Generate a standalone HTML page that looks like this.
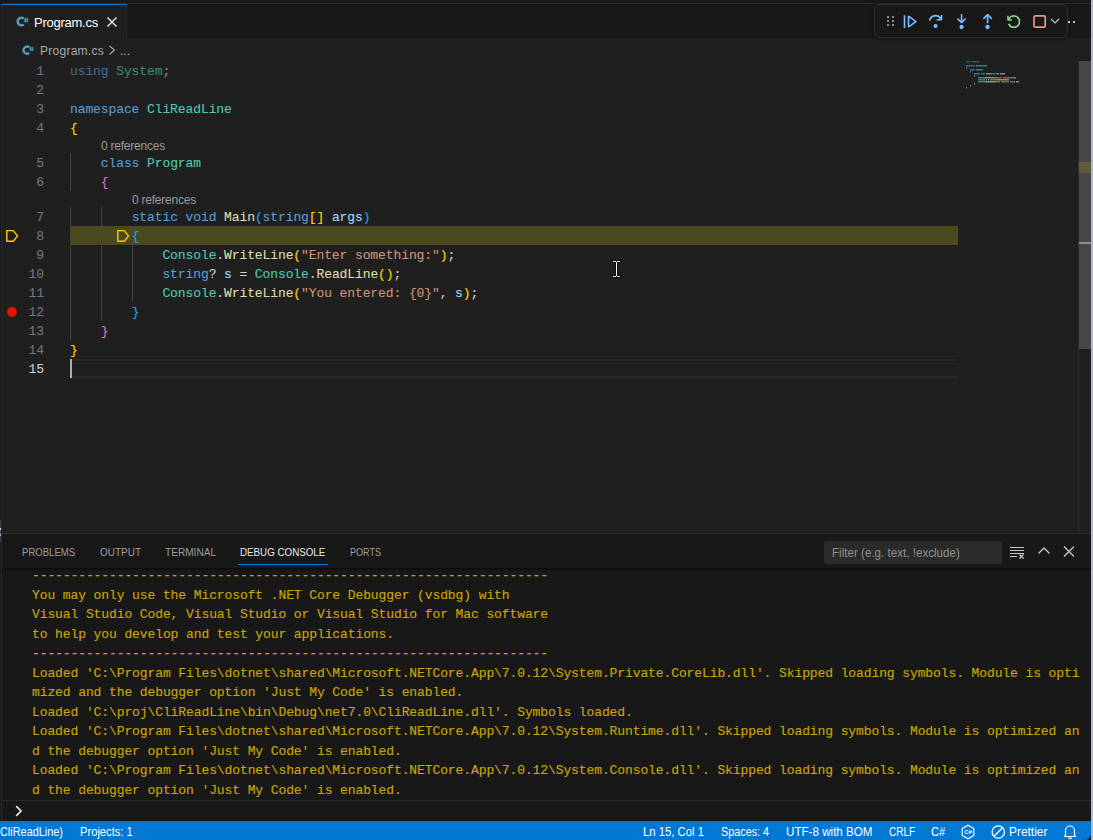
<!DOCTYPE html>
<html><head><meta charset="utf-8">
<style>
*{margin:0;padding:0;box-sizing:border-box}
html,body{width:1093px;height:840px;overflow:hidden;background:#181818}
body{position:relative;font-family:"Liberation Sans",sans-serif;color:#cccccc}
.a{position:absolute}
.mono{font-family:"Liberation Mono",monospace;font-size:13px;letter-spacing:-0.1px;white-space:pre;-webkit-text-stroke:0.12px currentColor}
.ln{position:absolute;left:0;margin-top:1px;width:44px;text-align:right;color:#6e7681}
.code{position:absolute;left:70px;margin-top:1px}
.k{color:#569cd6}.t{color:#4ec9b0}.f{color:#dcdcaa}.s{color:#ce9178}.v{color:#9cdcfe}.p{color:#cccccc}
.b1{color:#ffd700}.b2{color:#da70d6}.b3{color:#179fff}
.guide{position:absolute;width:1px;background:#404040}
.con{position:absolute;left:32px;color:#cca700}
</style></head><body>
<!-- left border -->
<div class="a" style="left:1px;top:4px;width:1px;height:817px;background:#2b2b2b"></div>
<div class="a" style="left:0;top:520px;width:1px;height:22px;background:#3b3e44"></div><div class="a" style="left:0;top:528px;width:1px;height:2px;background:#e0e0e0"></div><div class="a" style="left:0;top:533px;width:1px;height:2px;background:#4a9ad8"></div><div class="a" style="left:0;top:535px;width:1px;height:1px;background:#d8c060"></div>
<!-- right window edge -->
<div class="a" style="left:1091px;top:0;width:2px;height:840px;background:#b4b8d0"></div>

<!-- tab bar -->
<div class="a" style="left:2px;top:3px;width:1089px;height:35px;background:#181818;border-top:1px solid #2b2b2b"></div>
<div class="a" style="left:2px;top:4px;width:125px;height:34px;background:#1f1f1f;border-top:1px solid #0078d4;border-right:1px solid #2b2b2b"></div>

<!-- editor -->
<div class="a" style="left:2px;top:38px;width:1089px;height:495px;background:#1f1f1f"></div>

<!-- TABS -->
<svg class="a" style="left:15.7px;top:15.7px;transform:scale(1.0);transform-origin:0 0" width="14" height="12" viewBox="0 0 14 12"><path d="M7.85 2.6A3.75 3.75 0 1 0 7.85 8.4" stroke="#519aba" stroke-width="2.6" fill="none"/><path d="M9.3 1.8V6.6M11.1 1.8V6.6M7.9 3.3H12.4M7.9 5.1H12.4" stroke="#519aba" stroke-width="1.0" fill="none"/></svg>
<svg class="a" style="left:21.9px;top:45.2px;transform:scale(0.93);transform-origin:0 0" width="14" height="12" viewBox="0 0 14 12"><path d="M7.85 2.6A3.75 3.75 0 1 0 7.85 8.4" stroke="#519aba" stroke-width="2.6" fill="none"/><path d="M9.3 1.8V6.6M11.1 1.8V6.6M7.9 3.3H12.4M7.9 5.1H12.4" stroke="#519aba" stroke-width="1.0" fill="none"/></svg>
<div class="a" style="left:34px;top:6px;height:34px;line-height:34px;font-size:13px;color:#ffffff;letter-spacing:-0.25px;white-space:pre">Program.cs</div>
<svg class="a" style="left:106px;top:16px" width="12" height="12" viewBox="0 0 12 12"><path d="M1.5 1.5L10.5 10.5M10.5 1.5L1.5 10.5" stroke="#e0e0e0" stroke-width="1.5" fill="none"/></svg>
<!-- BREADCRUMBS -->
<div class="a" style="left:40px;top:41px;height:20px;line-height:20px;font-size:12px;color:#a9a9a9;letter-spacing:0.26px;white-space:pre">Program.cs</div>
<svg class="a" style="left:108px;top:45px" width="8" height="10" viewBox="0 0 8 10"><path d="M1.5 1L6.5 5L1.5 9.5" stroke="#a9a9a9" stroke-width="1.1" fill="none"/></svg>
<div class="a" style="left:120px;top:41px;height:20px;line-height:20px;font-size:12px;color:#a9a9a9;white-space:pre">...</div>
<!-- EDITOR -->
<div class="a" style="left:70px;top:359px;width:888px;height:19px;border-top:2px solid #282828;border-bottom:2px solid #282828"></div>
<div class="a" style="left:70px;top:226px;width:888px;height:19px;background:#4b4a1e"></div>
<div class="guide" style="left:70px;top:153px;height:38px"></div>
<div class="guide" style="left:70px;top:207px;height:133px"></div>
<div class="guide" style="left:101px;top:207px;height:114px"></div>
<div class="guide" style="left:132px;top:245px;height:57px"></div>
<div class="a" style="left:70px;top:359px;width:2px;height:19px;background:#aeafad"></div>
<div class="mono ln" style="top:61px;height:19px;line-height:19px;color:#6e7681">1</div>
<div class="mono code" style="top:61px;height:19px;line-height:19px"><span class="k" style="opacity:.6">using</span> <span class="t" style="opacity:.6">System</span><span style="opacity:.6">;</span></div>
<div class="mono ln" style="top:80px;height:19px;line-height:19px;color:#6e7681">2</div>
<div class="mono code" style="top:80px;height:19px;line-height:19px"></div>
<div class="mono ln" style="top:99px;height:19px;line-height:19px;color:#6e7681">3</div>
<div class="mono code" style="top:99px;height:19px;line-height:19px"><span class="k">namespace</span> <span class="t">CliReadLine</span></div>
<div class="mono ln" style="top:118px;height:19px;line-height:19px;color:#6e7681">4</div>
<div class="mono code" style="top:118px;height:19px;line-height:19px"><span class="b1">{</span></div>
<div class="mono ln" style="top:153px;height:19px;line-height:19px;color:#6e7681">5</div>
<div class="mono code" style="top:153px;height:19px;line-height:19px">    <span class="k">class</span> <span class="t">Program</span></div>
<div class="mono ln" style="top:172px;height:19px;line-height:19px;color:#6e7681">6</div>
<div class="mono code" style="top:172px;height:19px;line-height:19px">    <span class="b2">{</span></div>
<div class="mono ln" style="top:207px;height:19px;line-height:19px;color:#6e7681">7</div>
<div class="mono code" style="top:207px;height:19px;line-height:19px">        <span class="k">static</span> <span class="k">void</span> <span class="f">Main</span><span class="b3">(</span><span class="k">string</span><span class="b1">[]</span> <span class="v">args</span><span class="b3">)</span></div>
<div class="mono ln" style="top:226px;height:19px;line-height:19px;color:#6e7681">8</div>
<div class="mono code" style="top:226px;height:19px;line-height:19px">        <span class="b3">{</span></div>
<div class="mono ln" style="top:245px;height:19px;line-height:19px;color:#6e7681">9</div>
<div class="mono code" style="top:245px;height:19px;line-height:19px">            <span class="t">Console</span>.<span class="f">WriteLine</span><span class="b1">(</span><span class="s">"Enter something:"</span><span class="b1">)</span>;</div>
<div class="mono ln" style="top:264px;height:19px;line-height:19px;color:#6e7681">10</div>
<div class="mono code" style="top:264px;height:19px;line-height:19px">            <span class="k">string</span>? <span class="v">s</span> = <span class="t">Console</span>.<span class="f">ReadLine</span><span class="b1">()</span>;</div>
<div class="mono ln" style="top:283px;height:19px;line-height:19px;color:#6e7681">11</div>
<div class="mono code" style="top:283px;height:19px;line-height:19px">            <span class="t">Console</span>.<span class="f">WriteLine</span><span class="b1">(</span><span class="s">"You entered: {0}"</span>, <span class="v">s</span><span class="b1">)</span>;</div>
<div class="mono ln" style="top:302px;height:19px;line-height:19px;color:#6e7681">12</div>
<div class="mono code" style="top:302px;height:19px;line-height:19px">        <span class="b3">}</span></div>
<div class="mono ln" style="top:321px;height:19px;line-height:19px;color:#6e7681">13</div>
<div class="mono code" style="top:321px;height:19px;line-height:19px">    <span class="b2">}</span></div>
<div class="mono ln" style="top:340px;height:19px;line-height:19px;color:#6e7681">14</div>
<div class="mono code" style="top:340px;height:19px;line-height:19px"><span class="b1">}</span></div>
<div class="mono ln" style="top:359px;height:19px;line-height:19px;color:#cccccc">15</div>
<div class="mono code" style="top:359px;height:19px;line-height:19px"></div>
<div class="a" style="left:101px;top:138px;height:16px;line-height:16px;font-size:12px;color:#999999;letter-spacing:-0.23px;white-space:pre">0 references</div>
<div class="a" style="left:132px;top:192px;height:16px;line-height:16px;font-size:12px;color:#999999;letter-spacing:-0.23px;white-space:pre">0 references</div>
<svg class="a" style="left:5px;top:229px" width="15" height="15" viewBox="0 0 15 15"><path d="M1.8 1.6H8.2L12.6 6.9L8.2 12.3H1.8Z" stroke="#ffcc00" stroke-width="1.45" fill="none" stroke-linejoin="round"/></svg>
<svg class="a" style="left:116px;top:229px" width="15" height="15" viewBox="0 0 15 15"><path d="M1.8 1.6H8.2L12.6 6.9L8.2 12.3H1.8Z" stroke="#ffcc00" stroke-width="1.45" fill="none" stroke-linejoin="round"/></svg>
<div class="a" style="left:7px;top:307px;width:10px;height:10px;border-radius:50%;background:#e51400"></div>
<div class="a" style="left:874px;top:4px;width:194px;height:34px;background:#181818;border:1px solid #303030;border-radius:5px;box-shadow:0 0 4px rgba(0,0,0,.5)"></div>
<svg class="a" style="left:0;top:0" width="1093" height="40"><rect x="887" y="16" width="2" height="2" fill="#8a8a8a"/><rect x="887" y="20" width="2" height="2" fill="#8a8a8a"/><rect x="887" y="24" width="2" height="2" fill="#8a8a8a"/><rect x="892" y="16" width="2" height="2" fill="#8a8a8a"/><rect x="892" y="20" width="2" height="2" fill="#8a8a8a"/><rect x="892" y="24" width="2" height="2" fill="#8a8a8a"/></svg>
<svg class="a" style="left:900.9px;top:13px" width="17.2" height="17.2" viewBox="0 0 16 16"><path d="M2.5 2H4v12H2.5V2zm4.936.39L6.25 3v10l1.186.61 7-5V7.39l-7-5zM7.75 11.543V4.457L12.71 8l-4.96 3.543z" fill="#75beff"/></svg>
<svg class="a" style="left:926.9px;top:13px" width="17.2" height="17.2" viewBox="0 0 16 16"><path d="M14.25 1.75v4.5l-.75.75H9V5.5h3.1A5 5 0 0 0 3.05 7.3l-1.45-.4A6.5 6.5 0 0 1 12.75 3.7V1.75h1.5zM8 14a1.9 1.9 0 1 0 0-3.8A1.9 1.9 0 0 0 8 14z" fill="#75beff"/></svg>
<svg class="a" style="left:952.9px;top:13px" width="17.2" height="17.2" viewBox="0 0 16 16"><path d="M8 9.532h.542l3.905-3.905-1.061-1.06-2.637 2.61V1H7.251v6.177l-2.637-2.61-1.061 1.06 3.905 3.905H8zm1.956 3.481a2 2 0 1 1-4 0 2 2 0 0 1 4 0z" fill="#75beff"/></svg>
<svg class="a" style="left:978.9px;top:13px" width="17.2" height="17.2" viewBox="0 0 16 16"><path d="M8 1h-.542L3.553 4.905l1.061 1.06 2.637-2.61v6.177h1.498V3.355l2.637 2.61 1.061-1.06L8.542 1H8zm1.956 12.013a2 2 0 1 1-4 0 2 2 0 0 1 4 0z" fill="#75beff"/></svg>
<svg class="a" style="left:1004.9px;top:13px" width="17.2" height="17.2" viewBox="0 0 16 16"><path d="M12.75 8a4.5 4.5 0 0 1-8.61 1.834l-1.391.565A6.001 6.001 0 0 0 14.25 8 6 6 0 0 0 3.5 4.334V2.5H2v4l.75.75h3.5v-1.5H4.352A4.5 4.5 0 0 1 12.75 8z" fill="#89d185"/></svg>
<svg class="a" style="left:1032px;top:14px" width="15" height="14" viewBox="0 0 15 14"><rect x="2" y="1.9" width="11.2" height="11.2" rx="1.2" stroke="#ec967a" stroke-width="1.7" fill="none"/></svg>
<svg class="a" style="left:1049px;top:16px" width="12" height="10" viewBox="0 0 12 10"><path d="M2 3L6 7L10 3" stroke="#c5c5c5" stroke-width="1.2" fill="none"/></svg>
<div class="a" style="left:1068px;top:21px;width:2px;height:2px;background:#c5c5c5"></div><div class="a" style="left:1073px;top:21px;width:2px;height:2px;background:#c5c5c5"></div>
<div class="a" style="left:1078px;top:61px;width:1px;height:472px;background:#2b2b2b"></div>
<div class="a" style="left:1079px;top:61px;width:12px;height:288px;background:#464646"></div>
<div class="a" style="left:1079px;top:162px;width:12px;height:11px;background:#5f5b3b"></div>
<div class="a" style="left:1079px;top:242px;width:12px;height:2px;background:#8c8c8c"></div>
<!-- MINIMAP -->
<svg class="a" style="left:0;top:0" width="1093" height="100"><rect x="966" y="61" width="5" height="1.5" fill="#569cd6" fill-opacity="0.35"/><rect x="972" y="61" width="6" height="1.5" fill="#4ec9b0" fill-opacity="0.35"/><rect x="978" y="61" width="1" height="1.5" fill="#cccccc" fill-opacity="0.35"/><rect x="966" y="65" width="9" height="1.5" fill="#569cd6" fill-opacity="0.6"/><rect x="976" y="65" width="11" height="1.5" fill="#4ec9b0" fill-opacity="0.6"/><rect x="966" y="67" width="1" height="1.5" fill="#cccccc" fill-opacity="0.6"/><rect x="970" y="69" width="5" height="1.5" fill="#569cd6" fill-opacity="0.6"/><rect x="976" y="69" width="7" height="1.5" fill="#4ec9b0" fill-opacity="0.6"/><rect x="970" y="71" width="1" height="1.5" fill="#cccccc" fill-opacity="0.6"/><rect x="974" y="73" width="6" height="1.5" fill="#569cd6" fill-opacity="0.6"/><rect x="981" y="73" width="4" height="1.5" fill="#569cd6" fill-opacity="0.6"/><rect x="986" y="73" width="4" height="1.5" fill="#dcdcaa" fill-opacity="0.6"/><rect x="990" y="73" width="1" height="1.5" fill="#cccccc" fill-opacity="0.6"/><rect x="991" y="73" width="6" height="1.5" fill="#569cd6" fill-opacity="0.6"/><rect x="997" y="73" width="2" height="1.5" fill="#cccccc" fill-opacity="0.6"/><rect x="1000" y="73" width="4" height="1.5" fill="#9cdcfe" fill-opacity="0.6"/><rect x="1004" y="73" width="1" height="1.5" fill="#cccccc" fill-opacity="0.6"/><rect x="974" y="75" width="1" height="1.5" fill="#cccccc" fill-opacity="0.6"/><rect x="978" y="77" width="7" height="1.5" fill="#4ec9b0" fill-opacity="0.6"/><rect x="985" y="77" width="1" height="1.5" fill="#cccccc" fill-opacity="0.6"/><rect x="986" y="77" width="9" height="1.5" fill="#dcdcaa" fill-opacity="0.6"/><rect x="995" y="77" width="1" height="1.5" fill="#cccccc" fill-opacity="0.6"/><rect x="996" y="77" width="6" height="1.5" fill="#ce9178" fill-opacity="0.6"/><rect x="1003" y="77" width="11" height="1.5" fill="#ce9178" fill-opacity="0.6"/><rect x="1014" y="77" width="1" height="1.5" fill="#cccccc" fill-opacity="0.6"/><rect x="1015" y="77" width="1" height="1.5" fill="#cccccc" fill-opacity="0.6"/><rect x="978" y="79" width="6" height="1.5" fill="#569cd6" fill-opacity="0.6"/><rect x="984" y="79" width="1" height="1.5" fill="#cccccc" fill-opacity="0.6"/><rect x="986" y="79" width="1" height="1.5" fill="#9cdcfe" fill-opacity="0.6"/><rect x="988" y="79" width="1" height="1.5" fill="#cccccc" fill-opacity="0.6"/><rect x="990" y="79" width="7" height="1.5" fill="#4ec9b0" fill-opacity="0.6"/><rect x="997" y="79" width="1" height="1.5" fill="#cccccc" fill-opacity="0.6"/><rect x="998" y="79" width="8" height="1.5" fill="#dcdcaa" fill-opacity="0.6"/><rect x="1006" y="79" width="2" height="1.5" fill="#cccccc" fill-opacity="0.6"/><rect x="1008" y="79" width="1" height="1.5" fill="#cccccc" fill-opacity="0.6"/><rect x="978" y="81" width="7" height="1.5" fill="#4ec9b0" fill-opacity="0.6"/><rect x="985" y="81" width="1" height="1.5" fill="#cccccc" fill-opacity="0.6"/><rect x="986" y="81" width="9" height="1.5" fill="#dcdcaa" fill-opacity="0.6"/><rect x="995" y="81" width="1" height="1.5" fill="#cccccc" fill-opacity="0.6"/><rect x="996" y="81" width="4" height="1.5" fill="#ce9178" fill-opacity="0.6"/><rect x="1001" y="81" width="8" height="1.5" fill="#ce9178" fill-opacity="0.6"/><rect x="1010" y="81" width="4" height="1.5" fill="#ce9178" fill-opacity="0.6"/><rect x="1014" y="81" width="1" height="1.5" fill="#cccccc" fill-opacity="0.6"/><rect x="1016" y="81" width="1" height="1.5" fill="#9cdcfe" fill-opacity="0.6"/><rect x="1017" y="81" width="1" height="1.5" fill="#cccccc" fill-opacity="0.6"/><rect x="1018" y="81" width="1" height="1.5" fill="#cccccc" fill-opacity="0.6"/><rect x="974" y="83" width="1" height="1.5" fill="#cccccc" fill-opacity="0.6"/><rect x="970" y="85" width="1" height="1.5" fill="#cccccc" fill-opacity="0.6"/><rect x="966" y="87" width="1" height="1.5" fill="#cccccc" fill-opacity="0.6"/></svg>
<!-- IBEAM -->
<svg class="a" style="left:610px;top:258px" width="14" height="22" viewBox="610 258 14 22"><path d="M612 260H616.5V277H612ZM617.5 260H622V263H617.5ZM617.5 274H622V278H617.5Z" fill="none"/><rect x="612" y="260" width="10" height="3" fill="#000" fill-opacity=".6"/><rect x="612" y="275" width="10" height="3" fill="#000" fill-opacity=".6"/><rect x="615" y="262" width="3" height="14" fill="#000" fill-opacity=".6"/><rect x="613" y="261" width="3" height="1" fill="#fff"/><rect x="617" y="261" width="3" height="1" fill="#fff"/><rect x="616" y="262" width="1" height="14" fill="#fff"/><rect x="613" y="276" width="3" height="1" fill="#fff"/><rect x="617" y="276" width="3" height="1" fill="#fff"/></svg>
<!-- panel -->
<div class="a" style="left:2px;top:533px;width:1089px;height:288px;background:#181818;border-top:1px solid #2b2b2b"></div>

<!-- PANEL CONTENT -->
<div class="a" style="left:22px;top:542.29px;height:20px;line-height:20px;font-size:11px;color:#9d9d9d;white-space:pre;transform:scaleX(0.8691);transform-origin:0 0">PROBLEMS</div>
<div class="a" style="left:100px;top:542.29px;height:20px;line-height:20px;font-size:11px;color:#9d9d9d;white-space:pre;transform:scaleX(0.9071);transform-origin:0 0">OUTPUT</div>
<div class="a" style="left:165px;top:542.29px;height:20px;line-height:20px;font-size:11px;color:#9d9d9d;white-space:pre;transform:scaleX(0.9173);transform-origin:0 0">TERMINAL</div>
<div class="a" style="left:240px;top:542.29px;height:20px;line-height:20px;font-size:11px;color:#e7e7e7;white-space:pre;transform:scaleX(0.8885);transform-origin:0 0">DEBUG CONSOLE</div>
<div class="a" style="left:350px;top:542.29px;height:20px;line-height:20px;font-size:11px;color:#9d9d9d;white-space:pre;transform:scaleX(0.8223);transform-origin:0 0">PORTS</div>
<div class="a" style="left:238px;top:564px;width:90px;height:1px;background:#0078d4"></div>
<div class="a" style="left:824px;top:541px;width:178px;height:23px;background:#2a2a2a;border-radius:2px"></div>
<div class="a" style="left:831.5px;top:543.2px;height:20px;line-height:20px;font-size:12px;color:#8f8f8f;white-space:pre;transform:scaleX(0.9682);transform-origin:0 0">Filter (e.g. text, !exclude)</div>
<svg class="a" style="left:1008px;top:544px" width="18" height="16" viewBox="0 0 18 16"><path d="M2 3.5H16M2 6.5H16M2 9.5H16M2 12.5H9" stroke="#c5c5c5" stroke-width="1.1" fill="none"/><path d="M11.5 10.5L15.5 14.5M15.5 10.5L11.5 14.5" stroke="#c5c5c5" stroke-width="1.3" fill="none"/></svg>
<svg class="a" style="left:1036px;top:544px" width="16" height="12" viewBox="0 0 16 12"><path d="M2.5 9.5L8 4L13.5 9.5" stroke="#c5c5c5" stroke-width="1.3" fill="none"/></svg>
<svg class="a" style="left:1062px;top:544px" width="14" height="14" viewBox="0 0 14 14"><path d="M2 2.5L12 12.5M12 2.5L2 12.5" stroke="#c5c5c5" stroke-width="1.3" fill="none"/></svg>
<div class="a" style="left:2px;top:568px;width:1089px;height:232px;overflow:hidden">
<div class="mono a" style="left:30px;top:-1.70px;height:19.5px;line-height:19.5px;color:#cca700">-------------------------------------------------------------------</div>
<div class="mono a" style="left:30px;top:17.78px;height:19.5px;line-height:19.5px;color:#cca700">You may only use the Microsoft .NET Core Debugger (vsdbg) with</div>
<div class="mono a" style="left:30px;top:37.26px;height:19.5px;line-height:19.5px;color:#cca700">Visual Studio Code, Visual Studio or Visual Studio for Mac software</div>
<div class="mono a" style="left:30px;top:56.74px;height:19.5px;line-height:19.5px;color:#cca700">to help you develop and test your applications.</div>
<div class="mono a" style="left:30px;top:76.22px;height:19.5px;line-height:19.5px;color:#cca700">-------------------------------------------------------------------</div>
<div class="mono a" style="left:30px;top:95.70px;height:19.5px;line-height:19.5px;color:#cca700">Loaded 'C:\Program Files\dotnet\shared\Microsoft.NETCore.App\7.0.12\System.Private.CoreLib.dll'. Skipped loading symbols. Module is opti</div>
<div class="mono a" style="left:30px;top:115.18px;height:19.5px;line-height:19.5px;color:#cca700">mized and the debugger option 'Just My Code' is enabled.</div>
<div class="mono a" style="left:30px;top:134.66px;height:19.5px;line-height:19.5px;color:#cca700">Loaded 'C:\proj\CliReadLine\bin\Debug\net7.0\CliReadLine.dll'. Symbols loaded.</div>
<div class="mono a" style="left:30px;top:154.14px;height:19.5px;line-height:19.5px;color:#cca700">Loaded 'C:\Program Files\dotnet\shared\Microsoft.NETCore.App\7.0.12\System.Runtime.dll'. Skipped loading symbols. Module is optimized an</div>
<div class="mono a" style="left:30px;top:173.62px;height:19.5px;line-height:19.5px;color:#cca700">d the debugger option 'Just My Code' is enabled.</div>
<div class="mono a" style="left:30px;top:193.10px;height:19.5px;line-height:19.5px;color:#cca700">Loaded 'C:\Program Files\dotnet\shared\Microsoft.NETCore.App\7.0.12\System.Console.dll'. Skipped loading symbols. Module is optimized an</div>
<div class="mono a" style="left:30px;top:212.58px;height:19.5px;line-height:19.5px;color:#cca700">d the debugger option 'Just My Code' is enabled.</div>
<div class="a" style="left:0;top:0;width:1089px;height:3px;background:linear-gradient(#0c0c0c,rgba(24,24,24,0))"></div>
</div>
<div class="a" style="left:2px;top:800px;width:1089px;height:1px;background:#2b2b2b"></div>
<svg class="a" style="left:12px;top:804px" width="14" height="14" viewBox="0 0 14 14"><path d="M4.2 2.2L9 7L4.2 11.8" stroke="#e6e6e6" stroke-width="1.7" fill="none"/></svg>
<!-- STATUS -->
<!-- status bar -->
<div class="a" style="left:0;top:821px;width:1091px;height:19px;background:#0078d4;border-bottom-right-radius:6px"></div>

<div class="a" style="left:0px;top:821.64px;height:20px;line-height:20px;font-size:12px;color:#ffffff;white-space:pre;transform:scaleX(0.9078);transform-origin:0 0">CliReadLine)</div>
<div class="a" style="left:79.6px;top:821.64px;height:20px;line-height:20px;font-size:12px;color:#ffffff;white-space:pre;transform:scaleX(0.9312);transform-origin:0 0">Projects: 1</div>
<div class="a" style="left:642.7px;top:821.64px;height:20px;line-height:20px;font-size:12px;color:#ffffff;white-space:pre;transform:scaleX(0.9428);transform-origin:0 0">Ln 15, Col 1</div>
<div class="a" style="left:720.7px;top:821.64px;height:20px;line-height:20px;font-size:12px;color:#ffffff;white-space:pre;transform:scaleX(0.9007);transform-origin:0 0">Spaces: 4</div>
<div class="a" style="left:785.5px;top:821.64px;height:20px;line-height:20px;font-size:12px;color:#ffffff;white-space:pre;transform:scaleX(0.9686);transform-origin:0 0">UTF-8 with BOM</div>
<div class="a" style="left:888.8px;top:821.64px;height:20px;line-height:20px;font-size:12px;color:#ffffff;white-space:pre;transform:scaleX(0.8371);transform-origin:0 0">CRLF</div>
<div class="a" style="left:931px;top:821.64px;height:20px;line-height:20px;font-size:12px;color:#ffffff;white-space:pre;transform:scaleX(0.9346);transform-origin:0 0">C#</div>
<div class="a" style="left:1008.8px;top:821.64px;height:20px;line-height:20px;font-size:12px;color:#ffffff;white-space:pre;transform:scaleX(0.9922);transform-origin:0 0">Prettier</div>
<svg class="a" style="left:960px;top:824px" width="16" height="16" viewBox="0 0 16 16"><path d="M8 1.3L13.8 4.6V11.4L8 14.7L2.2 11.4V4.6Z" stroke="#ffffff" stroke-width="1.2" fill="none"/><text x="8" y="10.2" font-family="Liberation Sans" font-size="6" font-weight="bold" fill="#ffffff" text-anchor="middle">C#</text></svg>
<svg class="a" style="left:990px;top:824px" width="16" height="16" viewBox="0 0 16 16"><circle cx="8.3" cy="8" r="6.2" stroke="#ffffff" stroke-width="1.3" fill="none"/><path d="M12.6 3.7L4 12.3" stroke="#ffffff" stroke-width="1.3"/></svg>
<svg class="a" style="left:1062px;top:823px" width="16" height="17" viewBox="0 0 16 17"><path d="M3.5 12.5V7.5A4.5 4.5 0 0 1 12.5 7.5V12.5L13.5 13.5H2.5Z" stroke="#ffffff" stroke-width="1.2" fill="none" stroke-linejoin="round"/><path d="M6.5 14.5A1.6 1.6 0 0 0 9.5 14.5" stroke="#ffffff" stroke-width="1.2" fill="none"/></svg>
</body></html>
